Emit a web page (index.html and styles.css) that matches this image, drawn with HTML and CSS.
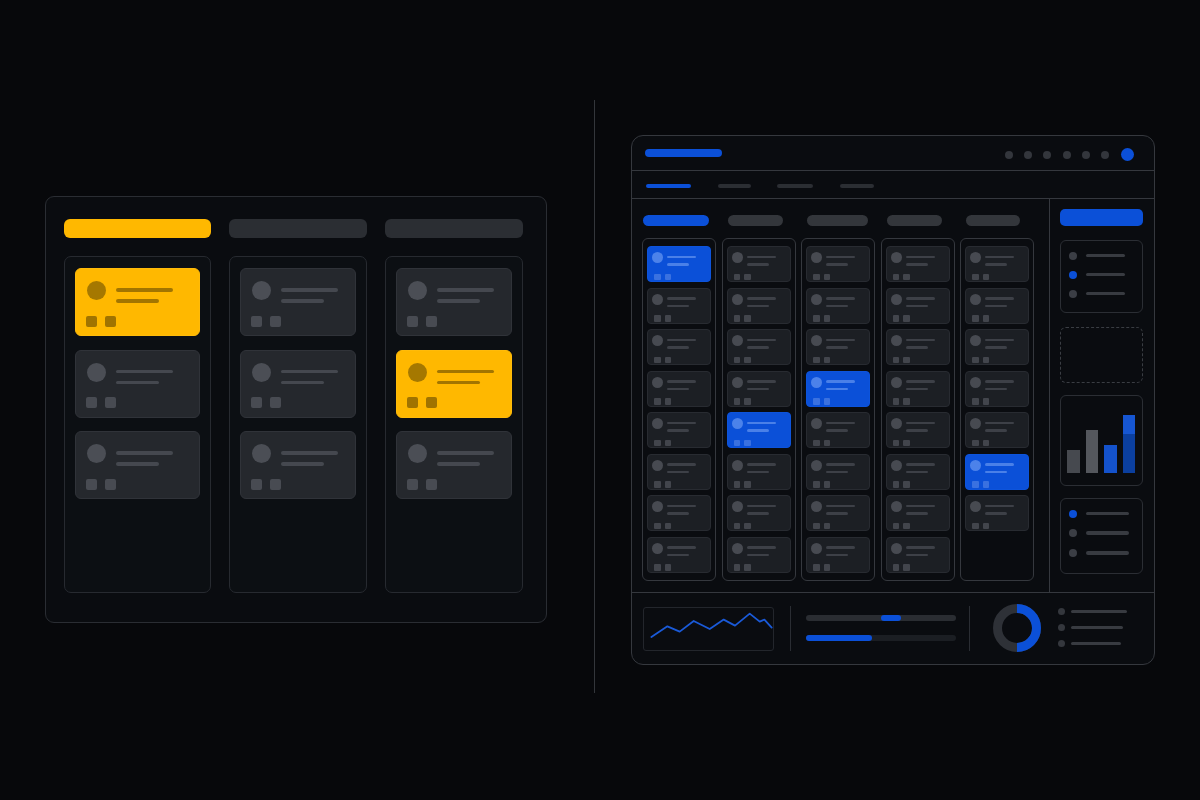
FILE: index.html
```html
<!DOCTYPE html>
<html lang="en">
<head>
    <meta charset="UTF-8">
    <meta name="viewport" content="width=device-width, initial-scale=1.0">
    <title>Boards</title>
    <link rel="stylesheet" href="styles.css">
</head>
<body>
    <div class="stage">
        <!-- Simple board: three lanes -->
        <section class="board" id="board"></section>

        <div class="split"></div>

        <!-- Dashboard: header, tabs, five lanes, sidebar, footer stats -->
        <section class="dash">
            <div class="dash-top">
                <span class="brand"></span>
                <div class="dots">
                    <i></i><i></i><i></i><i></i><i></i><i></i><i class="dot-me"></i>
                </div>
            </div>
            <nav class="tabs">
                <i class="tab tab--on"></i>
                <i class="tab tab--b"></i>
                <i class="tab tab--c"></i>
                <i class="tab tab--d"></i>
            </nav>
            <div class="dash-main">
                <div class="grid" id="grid"></div>
                <aside class="side">
                    <div class="side-btn"></div>
                    <div class="side-box side-list">
                        <div class="row"><i class="dot"></i><i class="bar"></i></div>
                        <div class="row"><i class="dot dot--on"></i><i class="bar"></i></div>
                        <div class="row"><i class="dot"></i><i class="bar"></i></div>
                    </div>
                    <div class="side-drop"></div>
                    <div class="side-box side-chart">
                        <i class="col col--a"></i>
                        <i class="col col--b"></i>
                        <i class="col col--c"></i>
                        <i class="col col--d"></i>
                    </div>
                    <div class="side-box side-list side-list--b">
                        <div class="row"><i class="dot dot--on"></i><i class="bar"></i></div>
                        <div class="row"><i class="dot"></i><i class="bar"></i></div>
                        <div class="row"><i class="dot"></i><i class="bar"></i></div>
                    </div>
                </aside>
            </div>
            <div class="dash-foot">
                <div class="spark">
                    <svg width="131" height="44" viewBox="0 0 131 44">
                        <polyline points="8.4,30 24.4,19.3 36.7,24.6 50.7,14 66.7,22 80.7,12.6 92,18.6 106.7,6.6 116.7,14.6 121.4,12.6 128.7,20.6"
                                  fill="none" stroke="#1a5ad8" stroke-width="1.8" stroke-linejoin="round" stroke-linecap="round"/>
                    </svg>
                </div>
                <div class="vr"></div>
                <div class="progress">
                    <div class="track"><span class="fill fill--mid"></span></div>
                    <div class="track track--dim"><span class="fill fill--start"></span></div>
                </div>
                <div class="vr vr--b"></div>
                <svg class="donut" width="48" height="48" viewBox="0 0 48 48">
                    <circle cx="24" cy="24" r="19.5" fill="none" stroke="#2e3137" stroke-width="9"/>
                    <path d="M24 4.5 A19.5 19.5 0 0 1 24 43.5" fill="none" stroke="#0b50d8" stroke-width="9"/>
                </svg>
                <div class="legend">
                    <div class="row"><i class="dot"></i><i class="bar bar--a"></i></div>
                    <div class="row"><i class="dot"></i><i class="bar bar--b"></i></div>
                    <div class="row"><i class="dot"></i><i class="bar bar--c"></i></div>
                </div>
            </div>
        </section>
    </div>

    <script>
        // one card: avatar + two text lines, two tag squares underneath
        function card(cls) {
            return `
                <div class="${cls}">
                    <div class="card-top"><span class="avatar"></span><span class="lines"><i></i><i></i></span></div>
                    <div class="tags"><i></i><i></i></div>
                </div>`;
        }

        // left board
        const lanes = [[0], [], [1]];
        document.getElementById('board').innerHTML = lanes.map((hot, i) => {
            let cards = '';
            for (let n = 0; n < 3; n++) {
                cards += card(hot.includes(n) ? 'card card--hot' : 'card');
            }
            return `
                <div class="lane">
                    <div class="lane-head ${i === 0 ? 'lane-head--on' : ''}"></div>
                    <div class="lane-list">${cards}</div>
                </div>`;
        }).join('');

        // dashboard lanes
        const cols = [
            { count: 8, blue: 0, head: 'h1' },
            { count: 8, blue: 4, head: 'h2' },
            { count: 8, blue: 3, head: 'h3' },
            { count: 8, blue: -1, head: 'h4' },
            { count: 7, blue: 5, head: 'h5' }
        ];
        document.getElementById('grid').innerHTML = cols.map(c => {
            let cards = '';
            for (let n = 0; n < c.count; n++) {
                cards += card(n === c.blue ? 'mini mini--on' : 'mini');
            }
            return `
                <div class="gcol">
                    <div class="ghead ghead--${c.head}"></div>
                    <div class="glist">${cards}</div>
                </div>`;
        }).join('');
    </script>
</body>
</html>
```

FILE: styles.css
```css
body {
    margin: 0;
    background-color: #07080b;
    font-family: "Liberation Sans", Arial, sans-serif;
}
i {
    display: block;
}
.stage {
    width: 1200px;
    height: 800px;
    display: flex;
    align-items: flex-start;
    overflow: hidden;
}

/* ---------- left board ---------- */
.board {
    box-sizing: border-box;
    width: 502px;
    height: 427px;
    margin: 196px 0 0 45px;
    padding: 22px 22px 29px 18px;
    display: grid;
    grid-template-columns: 147px 138px 138px;
    column-gap: 18px;
    background-color: #0a0c10;
    border: 1px solid #2a2d33;
    border-radius: 9px;
}
.lane {
    display: flex;
    flex-direction: column;
}
.lane-head {
    height: 19px;
    border-radius: 6px;
    background-color: #2b2e33;
}
.lane-head--on {
    background-color: #ffb800;
}
.lane-list {
    flex: 1;
    margin-top: 18px;
    padding: 11px 10px;
    display: flex;
    flex-direction: column;
    gap: 13.5px;
    background-color: #0c0f13;
    border: 1px solid #272a30;
    border-radius: 7px;
}
.card {
    box-sizing: border-box;
    height: 68px;
    padding: 12px 10px;
    background-color: #25282d;
    border: 1px solid #303339;
    border-radius: 6px;
}
.card .card-top {
    display: flex;
    align-items: flex-start;
    gap: 10px;
}
.card .avatar {
    width: 19px;
    height: 19px;
    margin-left: 1px;
    border-radius: 50%;
    background-color: #4b4e55;
}
.card .lines {
    display: flex;
    flex-direction: column;
    gap: 7.5px;
    margin-top: 7px;
}
.card .lines i {
    height: 3.5px;
    border-radius: 2px;
    background-color: #45484f;
}
.card .lines i:first-child {
    width: 57px;
}
.card .lines i:last-child {
    width: 43px;
}
.card .tags {
    display: flex;
    gap: 8px;
    margin-top: 13px;
}
.card .tags i {
    width: 11px;
    height: 11px;
    border-radius: 2px;
    background-color: #484b52;
}
.card--hot {
    background-color: #ffb800;
    border-color: #ffbb0a;
}
.card--hot .avatar {
    background-color: #a57800;
}
.card--hot .lines i {
    background-color: #a27500;
}
.card--hot .tags i {
    background-color: #a07300;
}

.split {
    width: 1px;
    height: 593px;
    margin: 100px 0 0 47px;
    background-color: #33363b;
}

/* ---------- dashboard ---------- */
.dash {
    box-sizing: border-box;
    width: 524px;
    height: 530px;
    margin: 135px 0 0 36px;
    display: flex;
    flex-direction: column;
    background-color: #0a0c10;
    border: 1px solid #35383e;
    border-radius: 12px;
    overflow: hidden;
}
.dash-top {
    height: 34px;
    display: flex;
    align-items: center;
    padding: 0 20px 0 13px;
    border-bottom: 1px solid #35383e;
}
.brand {
    width: 77px;
    height: 7.5px;
    border-radius: 4px;
    background-color: #0b50d8;
}
.dots {
    margin-left: auto;
    margin-top: 3px;
    display: flex;
    align-items: center;
    gap: 11.3px;
}
.dots i {
    width: 8px;
    height: 8px;
    border-radius: 50%;
    background-color: #33363c;
}
.dots .dot-me {
    width: 13.5px;
    height: 13.5px;
    background-color: #0b50d8;
}
.tabs {
    height: 28px;
    box-sizing: border-box;
    padding: 3px 0 0 14px;
    display: flex;
    align-items: center;
    gap: 26.5px;
    border-bottom: 1px solid #35383e;
}
.tab {
    height: 3.5px;
    border-radius: 2px;
    background-color: #2b2e33;
}
.tab--on { width: 45px; background-color: #0b50d8; }
.tab--b { width: 33px; }
.tab--c { width: 36px; }
.tab--d { width: 34px; }

.dash-main {
    height: 393px;
    display: flex;
    border-bottom: 1px solid #35383e;
}
.grid {
    flex: 1;
    padding: 16px 15px 13px 10px;
    display: grid;
    grid-template-columns: repeat(5, 1fr);
    column-gap: 5.5px;
}
.gcol {
    display: flex;
    flex-direction: column;
}
.ghead {
    height: 11px;
    margin: 0 0 12px 6px;
    border-radius: 6px;
    background-color: #33363b;
}
.ghead--h1 { width: 66px; margin-left: 1px; background-color: #0b50d8; }
.ghead--h2 { width: 55px; }
.ghead--h3 { width: 61px; }
.ghead--h4 { width: 55px; }
.ghead--h5 { width: 54px; }
.glist {
    flex: 1;
    padding: 7px 4px;
    display: flex;
    flex-direction: column;
    gap: 5.5px;
    border: 1px solid #35383e;
    border-radius: 6px;
}
.mini {
    box-sizing: border-box;
    height: 36px;
    padding: 5px 4px;
    background-color: #1c1f24;
    border: 1px solid #282b31;
    border-radius: 4px;
}
.mini .card-top {
    display: flex;
    align-items: flex-start;
    gap: 4px;
}
.mini .avatar {
    width: 11px;
    height: 11px;
    border-radius: 50%;
    background-color: #474a51;
}
.mini .lines {
    display: flex;
    flex-direction: column;
    gap: 5px;
    margin-top: 3.5px;
}
.mini .lines i {
    height: 2.5px;
    border-radius: 2px;
    background-color: #3d4047;
}
.mini .lines i:first-child { width: 29px; }
.mini .lines i:last-child { width: 22px; }
.mini .tags {
    display: flex;
    gap: 4px;
    margin: 8px 0 0 2px;
}
.mini .tags i {
    width: 6.5px;
    height: 6.5px;
    border-radius: 1px;
    background-color: #42454c;
}
.mini--on {
    background-color: #0b50d8;
    border-color: #0d54dc;
}
.mini--on .avatar { background-color: #4c82ea; }
.mini--on .lines i { background-color: #4a80e8; }
.mini--on .tags i { background-color: #3a71e0; }

/* sidebar */
.side {
    width: 105px;
    box-sizing: border-box;
    padding: 10px 11px 0 10px;
    display: flex;
    flex-direction: column;
    border-left: 1px solid #35383e;
}
.side-btn {
    height: 17px;
    border-radius: 5px;
    background-color: #0b50d8;
}
.side-box {
    box-sizing: border-box;
    border: 1px solid #2b2e34;
    border-radius: 6px;
}
.side-list {
    height: 73px;
    margin-top: 13.5px;
    padding: 11px 0 0 8px;
    display: flex;
    flex-direction: column;
    gap: 11px;
}
.side-list--b {
    height: 76px;
    margin-top: 12px;
    gap: 11.7px;
}
.row {
    display: flex;
    align-items: center;
}
.side .dot {
    width: 8px;
    height: 8px;
    border-radius: 50%;
    background-color: #3b3e45;
}
.side .dot--on {
    background-color: #0b50d8;
}
.side .bar {
    width: 39px;
    height: 3.5px;
    margin-left: 9px;
    border-radius: 2px;
    background-color: #383b41;
}
.side-list--b .bar {
    width: 43px;
}
.side-drop {
    height: 54px;
    margin-top: 14px;
    border: 1px dashed #3a3d43;
    border-radius: 6px;
}
.side-chart {
    height: 91px;
    margin-top: 12px;
    padding: 0 0 12px 6px;
    display: flex;
    align-items: flex-end;
    gap: 6px;
}
.side-chart .col {
    width: 12.5px;
}
.col--a { height: 23px; background-color: #46494f; }
.col--b { height: 43px; background-color: #54575d; }
.col--c { height: 28px; background-color: #1452cc; }
.col--d {
    height: 58px;
    background: linear-gradient(#1656d2 0, #1656d2 19px, #0b3f9f 19px);
}

/* footer stats */
.dash-foot {
    flex: 1;
    display: flex;
    align-items: center;
    padding: 0 11px;
}
.spark {
    box-sizing: border-box;
    width: 131px;
    height: 44px;
    border: 1px solid #23262c;
    border-radius: 3px;
}
.spark svg {
    display: block;
    margin: -1px 0 0 -1px;
}
.vr {
    width: 1px;
    height: 45px;
    margin: 0 15.5px;
    background-color: #2a2d33;
}
.vr--b {
    margin: 0 23px 0 13px;
}
.progress {
    width: 150px;
    display: flex;
    flex-direction: column;
    gap: 14px;
    margin-top: -2px;
}
.track {
    height: 6px;
    display: flex;
    border-radius: 3px;
    background-color: #2a2d32;
}
.track--dim {
    background-color: #1b1e23;
}
.fill {
    height: 6px;
    border-radius: 3px;
    background-color: #0b50d8;
}
.fill--mid {
    width: 20px;
    margin-left: 75px;
}
.fill--start {
    width: 66px;
}
.donut {
    display: block;
    margin-top: -2px;
}
.legend {
    margin-left: 17px;
    display: flex;
    flex-direction: column;
    gap: 9px;
    margin-top: -2px;
}
.legend .dot {
    width: 7px;
    height: 7px;
    border-radius: 50%;
    background-color: #34373d;
}
.legend .bar {
    height: 3.5px;
    margin-left: 6px;
    border-radius: 2px;
    background-color: #383b41;
}
.bar--a { width: 56px; }
.bar--b { width: 52px; }
.bar--c { width: 50px; }
```
